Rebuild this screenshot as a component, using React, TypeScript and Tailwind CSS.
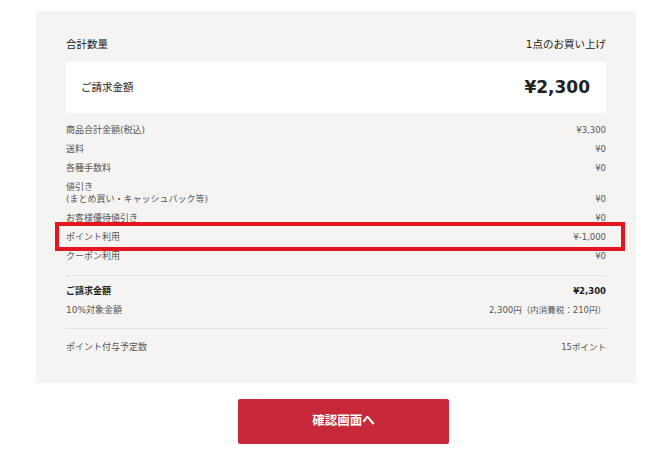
import React from "react";

type Row = { label: string[]; value: string; highlight?: boolean };

const rows: Row[] = [
  { label: ["商品合計金額(税込)"], value: "¥3,300" },
  { label: ["送料"], value: "¥0" },
  { label: ["各種手数料"], value: "¥0" },
  { label: ["値引き", "(まとめ買い・キャッシュバック等)"], value: "¥0" },
  { label: ["お客様優待値引き"], value: "¥0" },
  { label: ["ポイント利用"], value: "¥-1,000", highlight: true },
  { label: ["クーポン利用"], value: "¥0" },
];

const font = { fontFamily: '"DejaVu Sans", "Noto Sans CJK JP", sans-serif' };

const App = () => {
  return (
    <div className="w-[663px] h-[451px] bg-white pt-[11px]" style={font}>
      {/* summary panel */}
      <div className="ml-[36px] w-[600px] bg-[#f5f4f2] px-[30px] pt-[27px] pb-[27px]">
        <div className="flex justify-between items-center h-[14px] text-[10.5px] text-[#222]">
          <span>合計数量</span>
          <span>1点のお買い上げ</span>
        </div>

        <div className="mt-[10px] h-[51px] bg-white flex items-center justify-between pl-[15px] pr-[16px] text-[#222]">
          <span className="text-[10.5px]">ご請求金額</span>
          <span className="text-[17px] font-bold">¥2,300</span>
        </div>

        <div className="mt-[7px]">
          {rows.map((r, i) => (
            <div key={i} className="relative flex justify-between items-end py-[3.5px] leading-[12px] text-[#555]">
              <div className="flex flex-col text-[9px]">
                {r.label.map((l, j) => (
                  <span key={j}>{l}</span>
                ))}
              </div>
              <span className="text-[8.5px]">{r.value}</span>
              {r.highlight && (
                <div className="absolute -left-[11px] -right-[19px] -top-[5px] -bottom-[5px] border-4 border-[#e3161f]"></div>
              )}
            </div>
          ))}
        </div>

        <div className="mt-[10px] border-t border-[#e2e0dd]"></div>

        <div className="mt-[5px]">
          <div className="flex justify-between py-[3.5px] leading-[12px] font-bold text-[#222]">
            <span className="text-[9px]">ご請求金額</span>
            <span className="text-[8.5px]">¥2,300</span>
          </div>
          <div className="flex justify-between py-[3.5px] leading-[12px] text-[#555]">
            <span className="text-[9px]">10%対象金額</span>
            <span className="text-[8.5px]">2,300円（内消費税：210円）</span>
          </div>
        </div>

        <div className="mt-[9px] border-t border-[#e2e0dd]"></div>

        <div className="mt-[8px] flex justify-between py-[3.5px] leading-[12px] text-[#555]">
          <span className="text-[9px]">ポイント付与予定数</span>
          <span className="text-[8.5px]">15ポイント</span>
        </div>
      </div>

      <div className="mt-[16px] pl-[238px]">
        <button className="w-[211px] h-[45px] rounded-[2px] bg-[#c7283a] text-white text-[12.5px] font-bold">
          確認画面へ
        </button>
      </div>
    </div>
  );
};

export default App;
